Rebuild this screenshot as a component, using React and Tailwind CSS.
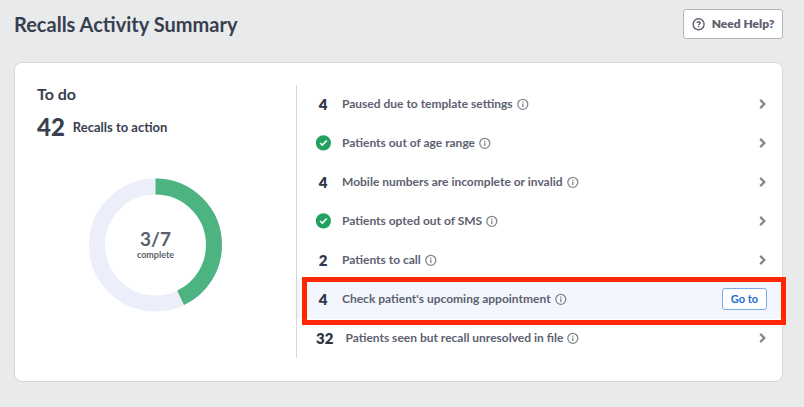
const tasks = [
  { count: 4, label: "Paused due to template settings" },
  { count: 0, label: "Patients out of age range" },
  { count: 4, label: "Mobile numbers are incomplete or invalid" },
  { count: 0, label: "Patients opted out of SMS" },
  { count: 2, label: "Patients to call" },
  { count: 4, label: "Check patient's upcoming appointment", active: true },
  { count: 32, label: "Patients seen but recall unresolved in file" },
];

function InfoIcon() {
  return (
    <svg viewBox="0 0 12 12" className="h-3 w-3 shrink-0" fill="none" aria-hidden="true">
      <circle cx="5.8" cy="6.3" r="5" stroke="#83868f" strokeWidth="1.3" />
      <path d="M5.8 5.6V9.1" stroke="#83868f" strokeWidth="1.3" />
      <path d="M5.8 3.5V4.8" stroke="#83868f" strokeWidth="1.3" />
    </svg>
  );
}

function HelpIcon() {
  return (
    <svg viewBox="0 0 14 14" className="h-[14px] w-[14px] shrink-0" fill="none" stroke="#5d6170" aria-hidden="true">
      <circle cx="6.6" cy="7.3" r="5.5" strokeWidth="1.4" />
      <path d="M5 6C5.1 5.1 5.7 4.7 6.6 4.7C7.5 4.7 8.2 5.1 8.2 5.9C8.2 6.9 6.6 7 6.6 8.3" strokeWidth="1.4" />
      <path d="M6.6 9V10.3" strokeWidth="1.4" />
    </svg>
  );
}

function CheckIcon() {
  return (
    <svg viewBox="0 0 16 16" className="-mx-px h-4 w-4 shrink-0" role="img" aria-label="Done">
      <circle cx="8.4" cy="7.8" r="7.6" fill="#21a05e" />
      <path d="M5.1 8L7.3 10.1L11.8 5.5" fill="none" stroke="#fff" strokeWidth="1.7" />
    </svg>
  );
}

function ChevronIcon() {
  return (
    <svg viewBox="0 0 8 10" className="h-[10px] w-2" fill="none" aria-hidden="true">
      <path d="M1.2 0.9L5.3 5L1.2 9.1" stroke="#83868f" strokeWidth="2.3" />
    </svg>
  );
}

function ProgressRing({ done, total }) {
  const radius = 58.5;
  const length = 2 * Math.PI * radius;
  return (
    <div className="grid place-items-center">
      <svg viewBox="0 0 134 134" className="col-start-1 row-start-1 h-[134px] w-[134px]" fill="none" aria-hidden="true">
        <circle cx="66.5" cy="67" r={radius} stroke="#eceff9" strokeWidth="16" />
        <circle
          cx="66.5"
          cy="67"
          r={radius}
          stroke="#4db380"
          strokeWidth="16"
          strokeDasharray={`${(length * done) / total} ${length}`}
          transform="rotate(-90 66.5 67)"
        />
      </svg>
      <div className="col-start-1 row-start-1 text-center text-[#5a5e6c]">
        <p className="text-[19px] leading-5 font-bold">
          {done}/{total}
        </p>
        <p className="text-[9px] leading-3 font-bold">complete</p>
      </div>
    </div>
  );
}

function TaskRow({ count, label, active }) {
  return (
    <li className={`relative flex h-[39px] items-center pr-[15px] pb-px pl-[19px] ${active ? "bg-[#f3f7fd]" : ""}`}>
      <span className="flex min-w-[14px] justify-center text-[15px] leading-5 font-extrabold text-[#2f3645]">
        {count > 0 ? count : <CheckIcon />}
      </span>
      <span className="ml-3 text-[12px] leading-4 font-bold text-[#5d6170]">{label}</span>
      <span className="ml-1">
        <InfoIcon />
      </span>
      {active ? (
        <button type="button" className="ml-auto h-[22px] w-[45px] rounded-[3px] border border-[#79abe9] bg-white text-[11px] leading-4 font-bold text-[#1b6bcf]">
          Go to
        </button>
      ) : (
        <button type="button" aria-label={`Open ${label}`} className="ml-auto">
          <ChevronIcon />
        </button>
      )}
      {active && <span className="pointer-events-none absolute -top-[3px] -right-1 -bottom-1.5 left-[5px] border-[5px] border-[#ff2600]" />}
    </li>
  );
}

export default function App() {
  return (
    <main className="min-h-screen bg-[#e9eaec] pt-[9px] pr-[21px] pb-6 pl-[14px] font-['Lato',sans-serif] text-[#383f4f]">
      <header className="flex items-center justify-between">
        <h1 className="text-[20px] leading-6 font-bold">Recalls Activity Summary</h1>
        <button type="button" className="flex h-[30px] w-[100px] items-center justify-center gap-1.5 rounded-[3px] border border-[#b3b5bb] bg-white text-[12px] leading-4 font-extrabold text-[#5d6170]">
          <HelpIcon />
          Need Help?
        </button>
      </header>

      <section className="mt-[23px] flex rounded-lg border border-[#d5d7da] bg-white pt-[21px] pb-[23px]">
        <div className="w-[281px] shrink-0 pl-[22px]">
          <h2 className="text-[16px] leading-5 font-bold">To do</h2>
          <p className="mt-[9px] flex items-center gap-2">
            <span className="text-[24px] leading-7 font-black">42</span>
            <span className="text-[13px] leading-4 font-bold">Recalls to action</span>
          </p>
          <div className="mt-[37px] pr-[22px]">
            <ProgressRing done={3} total={7} />
          </div>
        </div>
        <ul className="mt-px flex-1 border-l border-[#d5d7da]">
          {tasks.map((task) => (
            <TaskRow key={task.label} {...task} />
          ))}
        </ul>
      </section>
    </main>
  );
}
